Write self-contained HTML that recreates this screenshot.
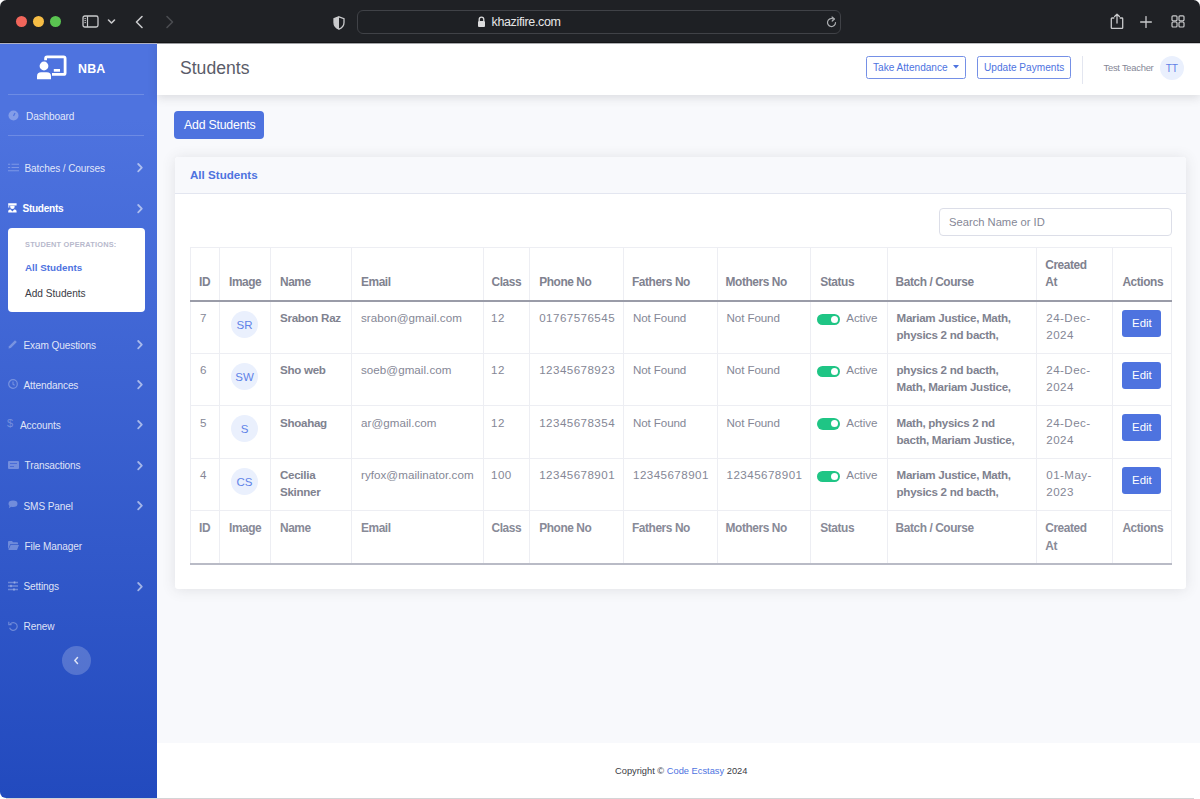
<!DOCTYPE html>
<html><head><meta charset="utf-8">
<style>
*{box-sizing:border-box;margin:0;padding:0}
html,body{width:1200px;height:799px;overflow:hidden;background:#fff;font-family:"Liberation Sans",sans-serif}
#win{position:absolute;left:0;top:0;width:1200px;height:798px;border-radius:6.5px 6.5px 6px 6px;overflow:hidden;background:#f8f9fc}
#bar{position:absolute;left:0;top:0;width:1200px;height:43px;background:#1f2125;border-bottom:1px solid #141517;z-index:2}
#barline{position:absolute;left:0;top:43px;width:1200px;height:1px;background:linear-gradient(90deg,#aeb1c4 0,#aeb1c4 157px,#9a9b9f 157px,#c8c9cc 1200px);z-index:2}
.tl{position:absolute;top:16px;width:11px;height:11px;border-radius:50%}
#side{position:absolute;left:0;top:43px;width:157px;height:755px;background:linear-gradient(180deg,#4e73df 10%,#224abe 100%)}
#top{position:absolute;left:157px;top:43px;width:1043px;height:52px;background:#fff;box-shadow:0 3px 9px rgba(58,59,69,.15)}
#foot{position:absolute;left:157px;top:743px;width:1043px;height:55px;background:#fff}
#bottomline{position:absolute;left:6px;top:798px;width:1188px;height:1px;background:#d4d4d6}
.abs{position:absolute;white-space:nowrap}
#card{position:absolute;left:175px;top:157px;width:1011px;height:432px;background:#fff;border-radius:3px;box-shadow:0 1px 14px rgba(58,59,69,.13)}
#cardh{position:absolute;left:0;top:0;width:1011px;height:37px;background:#f8f9fc;border-bottom:1px solid #e3e6f0;border-radius:4px 4px 0 0}
#cardh span{position:absolute;left:15px;top:10.5px;font-size:11.6px;font-weight:bold;color:#4e73df}
#tbl{position:absolute;left:15px;top:90px;border-collapse:collapse;table-layout:fixed;width:981px;font-size:11.6px;color:#858796;letter-spacing:-0.1px}
#tbl th,#tbl td{border:1px solid #edeef3;text-align:left;vertical-align:top;padding:8.5px 0 0 9px;line-height:17.2px;font-weight:normal}
#tbl th{font-weight:bold;letter-spacing:-0.42px;color:#80828f;font-size:11.9px}
#tbl .hr th{height:53px;vertical-align:bottom;padding:0 0 8.5px 8px;border-bottom:2px solid #9a9ca8}
#tbl .dr td{height:52.5px;padding-top:7.5px}
#tbl .fr th{height:53px;padding-top:9.3px;padding-left:8px;color:#888a97;border-bottom:2px solid #b9bbc6}
#tbl th:nth-child(2),#tbl th:nth-child(3),#tbl th:nth-child(4),#tbl th:nth-child(9),#tbl th:nth-child(12),#tbl th:nth-child(6){padding-left:9px}
#tbl td.n{letter-spacing:0.45px}
#tbl td.em{letter-spacing:0.05px}
#tbl td:nth-child(5){padding-left:7.5px}
#tbl td.b{font-weight:bold;letter-spacing:-0.3px;color:#80828f}
.av{width:27px;height:27px;border-radius:50%;background:#eaf0fd;color:#5f83e8;text-align:center;line-height:29px;font-size:11.5px;margin-top:1.5px;margin-left:2px}
.sw{display:inline-block;width:23px;height:11.5px;border-radius:6px;background:#1fc585;position:relative;vertical-align:-3px;margin-right:6px;margin-left:-3px}
.sw i{position:absolute;right:2.2px;top:2.2px;width:7px;height:7px;border-radius:50%;background:#fff}
.edit{width:39px;height:27px;background:#4e73df;border-radius:3px;color:#fff;font-size:11.4px;text-align:center;line-height:27px;margin-top:0.5px;letter-spacing:0}
#content{position:absolute;left:0;top:0}

.nav{position:absolute;left:0;width:157px;color:rgba(255,255,255,.85);font-size:10px;white-space:nowrap}
.nav .t{position:absolute;top:-6px}
.nav .chev{position:absolute;left:136px;top:-5px;width:10px;height:10px}
</style></head><body>
<div id="win">
  <div id="bar">
    <div class="tl" style="left:16px;background:#f1665b"></div>
    <div class="tl" style="left:33px;background:#f6bd45"></div>
    <div class="tl" style="left:50px;background:#5ac451"></div>
    <svg class="abs" style="left:81.5px;top:14.5px" width="17" height="13" viewBox="0 0 17 13"><rect x="1" y="1" width="15" height="11" rx="1.8" fill="none" stroke="#c9cacc" stroke-width="1.3"/><line x1="5.5" y1="1" x2="5.5" y2="12" stroke="#c9cacc" stroke-width="1.2"/><line x1="2.4" y1="3.6" x2="4" y2="3.6" stroke="#c9cacc" stroke-width="0.9"/><line x1="2.4" y1="5.6" x2="4" y2="5.6" stroke="#c9cacc" stroke-width="0.9"/><line x1="2.4" y1="7.6" x2="4" y2="7.6" stroke="#c9cacc" stroke-width="0.9"/></svg>
    <svg class="abs" style="left:107px;top:18px" width="9" height="7" viewBox="0 0 9 7"><path d="M1.5 2 L4.5 5 L7.5 2" fill="none" stroke="#c9cacc" stroke-width="1.6" stroke-linecap="round" stroke-linejoin="round"/></svg>
    <svg class="abs" style="left:134px;top:15px" width="10" height="14" viewBox="0 0 10 14"><path d="M8 1.5 L2.5 7 L8 12.5" fill="none" stroke="#c9cacc" stroke-width="1.6" stroke-linecap="round" stroke-linejoin="round"/></svg>
    <svg class="abs" style="left:165px;top:15px" width="10" height="14" viewBox="0 0 10 14"><path d="M2 1.5 L7.5 7 L2 12.5" fill="none" stroke="#4a4c50" stroke-width="1.6" stroke-linecap="round" stroke-linejoin="round"/></svg>
    <svg class="abs" style="left:332.5px;top:15.5px" width="12" height="14" viewBox="0 0 12 14"><path d="M6 0.8 L11 2.6 L11 6.5 C11 9.8 8.8 12 6 13.2 C3.2 12 1 9.8 1 6.5 L1 2.6 Z" fill="none" stroke="#c9cacc" stroke-width="1.3"/><path d="M6 0.8 L1 2.6 L1 6.5 C1 9.8 3.2 12 6 13.2 Z" fill="#c9cacc"/></svg>
    <div class="abs" style="left:357px;top:10px;width:484px;height:24px;border:1px solid #404247;border-radius:6px;background:#1e2024"></div>
    <svg class="abs" style="left:477px;top:16px" width="9" height="12" viewBox="0 0 9 12"><path d="M2.2 5 V3.5 a2.3 2.3 0 0 1 4.6 0 V5" fill="none" stroke="#dcdcdd" stroke-width="1.3"/><rect x="1" y="5" width="7" height="6" rx="1" fill="#dcdcdd"/></svg>
    <div class="abs" style="left:491.5px;top:15px;font-size:12.5px;color:#e6e6e7;letter-spacing:-0.35px">khazifire.com</div>
    <svg class="abs" style="left:824.5px;top:16px" width="13" height="13" viewBox="0 0 13 13"><path d="M10.5 6.5 A4 4 0 1 1 8.2 2.9" fill="none" stroke="#aeb0b3" stroke-width="1.2" stroke-linecap="round"/><path d="M7 1 L9.5 3 L7.2 5" fill="none" stroke="#aeb0b3" stroke-width="1.2" stroke-linecap="round" stroke-linejoin="round"/></svg>
    <svg class="abs" style="left:1109.5px;top:12.5px" width="14" height="17" viewBox="0 0 14 17"><path d="M4.3 5 H2 Q1.3 5 1.3 5.7 V14.7 Q1.3 15.4 2 15.4 H12 Q12.7 15.4 12.7 14.7 V5.7 Q12.7 5 12 5 H9.7" fill="none" stroke="#c9cacc" stroke-width="1.3" stroke-linejoin="round"/><path d="M7 10 V1.3 M4.6 3.5 L7 1.1 L9.4 3.5" fill="none" stroke="#c9cacc" stroke-width="1.3" stroke-linecap="round" stroke-linejoin="round"/></svg>
    <svg class="abs" style="left:1140px;top:15.5px" width="12" height="12" viewBox="0 0 12 12"><path d="M6 0.6 V11.4 M0.6 6 H11.4" fill="none" stroke="#c9cacc" stroke-width="1.3" stroke-linecap="round"/></svg>
    <svg class="abs" style="left:1170.5px;top:14.8px" width="14" height="13" viewBox="0 0 14 13"><rect x="1" y="0.8" width="5" height="5" rx="1" fill="none" stroke="#c9cacc" stroke-width="1.2"/><rect x="8" y="0.8" width="5" height="5" rx="1" fill="none" stroke="#c9cacc" stroke-width="1.2"/><rect x="1" y="7" width="5" height="5" rx="1" fill="none" stroke="#c9cacc" stroke-width="1.2"/><rect x="8" y="7" width="5" height="5" rx="1" fill="none" stroke="#c9cacc" stroke-width="1.2"/></svg>
  </div>


  <div id="side">
    <svg class="abs" style="left:36px;top:12px" width="31" height="25" viewBox="0 0 31 25">
      <path d="M9.6 5.2 V3.4 Q9.6 1.9 11.1 1.9 H27.6 Q29.1 1.9 29.1 3.4 V17.9 Q29.1 19.4 27.6 19.4 H16" fill="none" stroke="#fff" stroke-width="2.8"/>
      <rect x="17.8" y="14" width="6.2" height="2.7" fill="#fff"/>
      <circle cx="8" cy="11" r="4.4" fill="#fff"/>
      <path d="M1 24.2 V21.5 Q1 17.3 5.2 17.3 H10.8 Q15 17.3 15 21.5 V24.2 Z" fill="#fff"/>
    </svg>
    <div class="abs" style="left:78px;top:19px;font-size:12.4px;font-weight:bold;color:#fff;letter-spacing:0.2px">NBA</div>
    <div class="abs" style="left:8px;top:51px;width:136px;height:1px;background:rgba(255,255,255,.18)"></div>
    <div class="abs" style="left:8px;top:92px;width:136px;height:1px;background:rgba(255,255,255,.18)"></div>
<svg class="abs" style="left:8px;top:67px" width="11" height="11" viewBox="0 0 11 11"><circle cx="5.5" cy="5.5" r="5" fill="rgba(255,255,255,.3)"/><path d="M5.5 6 L7 3" stroke="#4e73df" stroke-width="1.2"/></svg>
<div class="abs" style="left:26px;top:67.8px;font-size:10.1px;letter-spacing:-0.12px;color:rgba(255,255,255,.85);">Dashboard</div>
<svg class="abs" style="left:8px;top:120px" width="11" height="9" viewBox="0 0 11 9"><path d="M0 1.2 H2.2 M0 4.5 H2.2 M0 7.8 H11 M3.5 1.2 H11 M3.5 4.5 H11" stroke="rgba(255,255,255,.28)" stroke-width="1.1"/></svg>
<div class="abs" style="left:24.5px;top:119.8px;font-size:10.1px;letter-spacing:-0.12px;color:rgba(255,255,255,.85);">Batches / Courses</div>
<svg class="abs" style="left:136px;top:119px" width="8" height="11" viewBox="0 0 8 11"><path d="M2.2 2 L5.8 5.7 L2.2 9.4" fill="none" stroke="rgba(255,255,255,.55)" stroke-width="1.8" stroke-linecap="round" stroke-linejoin="round"/></svg>
<svg class="abs" style="left:7.8px;top:160.3px" width="9" height="10" viewBox="0 0 9 10"><path d="M0.2 0.2 H8.6 V2.6 H0.2 Z" fill="#fff"/><path d="M0.8 2.4 V4.6" stroke="#fff" stroke-width="0.9"/><path d="M2.2 2.8 H6.6 V4 Q6.6 6 4.4 6 Q2.2 6 2.2 4 Z" fill="#fff"/><path d="M0.2 9.6 V8.4 Q0.2 6.6 2 6.6 H2.6 L4.4 8.4 L6.2 6.6 H6.8 Q8.6 6.6 8.6 8.4 V9.6 Z" fill="#fff"/></svg>
<div class="abs" style="left:22.5px;top:159.8px;font-size:10.1px;letter-spacing:-0.3px;color:#fff;font-weight:bold;">Students</div>
<svg class="abs" style="left:136px;top:160px" width="8" height="11" viewBox="0 0 8 11"><path d="M2.2 2 L5.8 5.7 L2.2 9.4" fill="none" stroke="rgba(255,255,255,.55)" stroke-width="1.8" stroke-linecap="round" stroke-linejoin="round"/></svg>
<svg class="abs" style="left:8px;top:296px" width="10" height="10" viewBox="0 0 10 10"><path d="M0.5 9.5 L1 7.2 L7 1.2 L8.8 3 L2.8 9 Z" fill="rgba(255,255,255,.3)"/></svg>
<div class="abs" style="left:23.5px;top:296.8px;font-size:10.1px;letter-spacing:-0.12px;color:rgba(255,255,255,.85);">Exam Questions</div>
<svg class="abs" style="left:136px;top:296px" width="8" height="11" viewBox="0 0 8 11"><path d="M2.2 2 L5.8 5.7 L2.2 9.4" fill="none" stroke="rgba(255,255,255,.55)" stroke-width="1.8" stroke-linecap="round" stroke-linejoin="round"/></svg>
<svg class="abs" style="left:8px;top:336px" width="10" height="10" viewBox="0 0 10 10"><circle cx="5" cy="5" r="4.3" fill="none" stroke="rgba(255,255,255,.3)" stroke-width="1.2"/><path d="M5 2.5 V5.2 L6.6 6.2" fill="none" stroke="rgba(255,255,255,.3)" stroke-width="1.1"/></svg>
<div class="abs" style="left:23.5px;top:336.8px;font-size:10.1px;letter-spacing:-0.12px;color:rgba(255,255,255,.85);">Attendances</div>
<svg class="abs" style="left:136px;top:336px" width="8" height="11" viewBox="0 0 8 11"><path d="M2.2 2 L5.8 5.7 L2.2 9.4" fill="none" stroke="rgba(255,255,255,.55)" stroke-width="1.8" stroke-linecap="round" stroke-linejoin="round"/></svg>
<div class="abs" style="left:7px;top:374px;font-size:11px;color:rgba(255,255,255,.3)">$</div>
<div class="abs" style="left:20px;top:376.8px;font-size:10.1px;letter-spacing:-0.12px;color:rgba(255,255,255,.85);">Accounts</div>
<svg class="abs" style="left:136px;top:376px" width="8" height="11" viewBox="0 0 8 11"><path d="M2.2 2 L5.8 5.7 L2.2 9.4" fill="none" stroke="rgba(255,255,255,.55)" stroke-width="1.8" stroke-linecap="round" stroke-linejoin="round"/></svg>
<svg class="abs" style="left:8px;top:418px" width="11" height="8" viewBox="0 0 11 8"><rect x="0" y="0" width="11" height="8" rx="1" fill="rgba(255,255,255,.3)"/><path d="M2 2.5 H9 M2 5.5 H6" stroke="#4a6cd8" stroke-width="1"/></svg>
<div class="abs" style="left:24.5px;top:416.8px;font-size:10.1px;letter-spacing:-0.12px;color:rgba(255,255,255,.85);">Transactions</div>
<svg class="abs" style="left:136px;top:417px" width="8" height="11" viewBox="0 0 8 11"><path d="M2.2 2 L5.8 5.7 L2.2 9.4" fill="none" stroke="rgba(255,255,255,.55)" stroke-width="1.8" stroke-linecap="round" stroke-linejoin="round"/></svg>
<svg class="abs" style="left:8px;top:457px" width="10" height="9" viewBox="0 0 10 9"><path d="M5 0.5 Q9.5 0.5 9.5 3.8 Q9.5 7 5 7 Q4 7 3.2 6.8 L0.8 8.3 L1.5 6 Q0.5 5 0.5 3.8 Q0.5 0.5 5 0.5 Z" fill="rgba(255,255,255,.3)"/></svg>
<div class="abs" style="left:23.5px;top:457.8px;font-size:10.1px;letter-spacing:-0.12px;color:rgba(255,255,255,.85);">SMS Panel</div>
<svg class="abs" style="left:136px;top:457px" width="8" height="11" viewBox="0 0 8 11"><path d="M2.2 2 L5.8 5.7 L2.2 9.4" fill="none" stroke="rgba(255,255,255,.55)" stroke-width="1.8" stroke-linecap="round" stroke-linejoin="round"/></svg>
<svg class="abs" style="left:8px;top:498px" width="11" height="9" viewBox="0 0 11 9"><path d="M0 1 Q0 0 1 0 H4 L5 1.3 H9 Q10 1.3 10 2.3 V3.3 H2.2 L0 8.5 Z" fill="rgba(255,255,255,.3)"/><path d="M2.6 4 H11 L9 9 H0.4 Z" fill="rgba(255,255,255,.3)"/></svg>
<div class="abs" style="left:24.5px;top:497.8px;font-size:10.1px;letter-spacing:-0.12px;color:rgba(255,255,255,.85);">File Manager</div>
<svg class="abs" style="left:8px;top:538px" width="10" height="10" viewBox="0 0 10 10"><path d="M0 1.5 H10 M0 5 H10 M0 8.5 H10" stroke="rgba(255,255,255,.3)" stroke-width="1.3"/><path d="M6.5 0.3 V2.7 M3 3.8 V6.2 M6 7.3 V9.7" stroke="rgba(255,255,255,.3)" stroke-width="1.6"/></svg>
<div class="abs" style="left:23.5px;top:537.8px;font-size:10.1px;letter-spacing:-0.12px;color:rgba(255,255,255,.85);">Settings</div>
<svg class="abs" style="left:136px;top:538px" width="8" height="11" viewBox="0 0 8 11"><path d="M2.2 2 L5.8 5.7 L2.2 9.4" fill="none" stroke="rgba(255,255,255,.55)" stroke-width="1.8" stroke-linecap="round" stroke-linejoin="round"/></svg>
<svg class="abs" style="left:8px;top:578px" width="10" height="10" viewBox="0 0 10 10"><path d="M2.2 3 A3.9 3.9 0 1 1 1.6 6.8" fill="none" stroke="rgba(255,255,255,.3)" stroke-width="1.2"/><path d="M0.8 0.8 V3.6 H3.6" fill="none" stroke="rgba(255,255,255,.3)" stroke-width="1.2"/></svg>
<div class="abs" style="left:23.5px;top:577.8px;font-size:10.1px;letter-spacing:-0.12px;color:rgba(255,255,255,.85);">Renew</div>
<div class="abs" style="left:8px;top:185px;width:137px;height:84px;background:#fff;border-radius:4px">
  <div class="abs" style="left:17px;top:12px;font-size:7.4px;color:#b7b9cc;font-weight:bold;letter-spacing:0.2px">STUDENT OPERATIONS:</div>
  <div class="abs" style="left:17px;top:34px;font-size:9.8px;color:#4e73df;font-weight:bold">All Students</div>
  <div class="abs" style="left:17px;top:60px;font-size:10.1px;color:#3a3b45">Add Students</div>
</div>
<div class="abs" style="left:62px;top:603px;width:29px;height:29px;border-radius:50%;background:rgba(255,255,255,.2)"></div>
<svg class="abs" style="left:72px;top:612px" width="8" height="11" viewBox="0 0 8 11"><path d="M5.5 2.5 L2.8 5.5 L5.5 8.5" fill="none" stroke="rgba(255,255,255,.8)" stroke-width="1.5" stroke-linecap="round" stroke-linejoin="round"/></svg>
  </div>
  <div id="top">
    <div class="abs" style="left:23px;top:14.5px;font-size:17.6px;color:#5a5c69">Students</div>
    <div class="abs" style="left:709px;top:13px;width:100px;height:23px;border:1px solid #7590e6;border-radius:2.5px"></div>
    <div class="abs" style="left:716px;top:18.5px;font-size:10.1px;color:#4e73df">Take Attendance</div>
    <svg class="abs" style="left:796px;top:22px" width="6" height="4" viewBox="0 0 6 4"><path d="M0 0 H6 L3 3.5 Z" fill="#4e73df"/></svg>
    <div class="abs" style="left:820px;top:13px;width:94px;height:23px;border:1px solid #7590e6;border-radius:2.5px"></div>
    <div class="abs" style="left:827px;top:18.5px;font-size:10.1px;color:#4e73df">Update Payments</div>
    <div class="abs" style="left:925px;top:13px;width:1px;height:28px;background:#e3e6f0"></div>
    <div class="abs" style="left:946.5px;top:18.5px;font-size:9.4px;color:#858796;letter-spacing:-0.25px">Test Teacher</div>
    <div class="abs" style="left:1003px;top:12.5px;width:24px;height:24px;border-radius:50%;background:#eaf0fd"></div>
    <div class="abs" style="left:1008.8px;top:20.3px;font-size:10.2px;color:#5f80e6;letter-spacing:-0.3px">TT</div>
  </div>
  <div id="content">
    <div class="abs" style="left:174px;top:111px;width:90px;height:28px;background:#4e73df;border-radius:4px"></div>
    <div class="abs" style="left:184px;top:118px;font-size:12.3px;color:#fff;letter-spacing:-0.2px">Add Students</div>
    <div id="card">
      <div id="cardh"><span>All Students</span></div>
      <div class="abs" style="left:764px;top:51px;width:233px;height:28px;border:1px solid #dcdee8;border-radius:4px"></div>
      <div class="abs" style="left:774px;top:58.5px;font-size:11.2px;color:#858796">Search Name or ID</div>
      <table id="tbl"><colgroup><col style="width:29px"><col style="width:51px"><col style="width:81px"><col style="width:131.5px"><col style="width:46.7px"><col style="width:93.8px"><col style="width:93.6px"><col style="width:93.7px"><col style="width:76.3px"><col style="width:149.7px"><col style="width:76.2px"><col style="width:59.0px"></colgroup>
<thead><tr class="hr"><th>ID</th><th>Image</th><th>Name</th><th>Email</th><th>Class</th><th>Phone No</th><th>Fathers No</th><th>Mothers No</th><th>Status</th><th>Batch / Course</th><th>Created<br>At</th><th>Actions</th></tr></thead><tbody>
<tr class="dr"><td class="n">7</td><td><div class="av">SR</div></td><td class="b">Srabon Raz</td><td class="em">srabon@gmail.com</td><td class="n">12</td><td class="n">01767576545</td><td class="">Not Found</td><td class="">Not Found</td><td><span class="sw"><i></i></span>Active</td><td class="b">Mariam Justice, Math,<br>physics 2 nd bacth,</td><td class="n">24-Dec-<br>2024</td><td><div class="edit">Edit</div></td></tr>
<tr class="dr"><td class="n">6</td><td><div class="av">SW</div></td><td class="b">Sho web</td><td class="em">soeb@gmail.com</td><td class="n">12</td><td class="n">12345678923</td><td class="">Not Found</td><td class="">Not Found</td><td><span class="sw"><i></i></span>Active</td><td class="b">physics 2 nd bacth,<br>Math, Mariam Justice,</td><td class="n">24-Dec-<br>2024</td><td><div class="edit">Edit</div></td></tr>
<tr class="dr"><td class="n">5</td><td><div class="av">S</div></td><td class="b">Shoahag</td><td class="em">ar@gmail.com</td><td class="n">12</td><td class="n">12345678354</td><td class="">Not Found</td><td class="">Not Found</td><td><span class="sw"><i></i></span>Active</td><td class="b">Math, physics 2 nd<br>bacth, Mariam Justice,</td><td class="n">24-Dec-<br>2024</td><td><div class="edit">Edit</div></td></tr>
<tr class="dr"><td class="n">4</td><td><div class="av">CS</div></td><td class="b">Cecilia<br>Skinner</td><td class="em">ryfox@mailinator.com</td><td class="n">100</td><td class="n">12345678901</td><td class="n">12345678901</td><td class="n">12345678901</td><td><span class="sw"><i></i></span>Active</td><td class="b">Mariam Justice, Math,<br>physics 2 nd bacth,</td><td class="n">01-May-<br>2023</td><td><div class="edit">Edit</div></td></tr>
</tbody><tfoot><tr class="fr"><th>ID</th><th>Image</th><th>Name</th><th>Email</th><th>Class</th><th>Phone No</th><th>Fathers No</th><th>Mothers No</th><th>Status</th><th>Batch / Course</th><th>Created<br>At</th><th>Actions</th></tr></tfoot></table>
    </div>
  </div>
  <div id="foot"><div class="abs" style="left:458px;top:22.5px;font-size:9.3px;color:#3a3b45">Copyright &copy; <span style="color:#4e73df">Code Ecstasy</span> 2024</div></div>
  <div id="barline"></div>
</div>
<div id="bottomline"></div>
</body></html>
